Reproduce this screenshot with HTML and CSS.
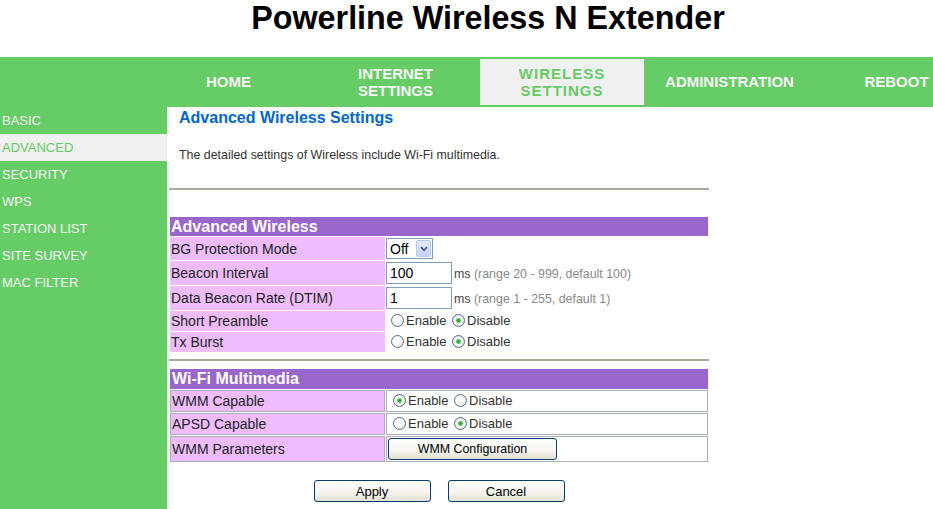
FILE: index.html
```html
<!DOCTYPE html>
<html>
<head>
<meta charset="utf-8">
<title>Advanced Wireless Settings</title>
<link rel="stylesheet" href="styles.css">
</head>
<body>
<div class="page">
  <h1 class="title">Powerline Wireless N Extender</h1>
  <nav class="topnav">
    <a class="tab">HOME</a>
    <a class="tab">INTERNET<br>SETTINGS</a>
    <a class="tab active">WIRELESS<br>SETTINGS</a>
    <a class="tab">ADMINISTRATION</a>
    <a class="tab">REBOOT</a>
  </nav>
  <div class="body-row">
    <ul class="sidenav">
      <li>BASIC</li>
      <li class="active">ADVANCED</li>
      <li>SECURITY</li>
      <li>WPS</li>
      <li>STATION LIST</li>
      <li>SITE SURVEY</li>
      <li>MAC FILTER</li>
    </ul>
    <main class="content">
      <h2 class="heading">Advanced Wireless Settings</h2>
      <p class="desc">The detailed settings of Wireless include Wi-Fi multimedia.</p>
      <hr class="rule">
      <table class="settings first-table">
        <tr><td class="hdr" colspan="2">Advanced Wireless</td></tr>
        <tr>
          <td class="lbl">BG Protection Mode</td>
          <td class="val">
            <span class="selwrap">
              <select class="sel"><option>Off</option><option>Auto</option><option>On</option></select>
              <span class="selarrow"><svg width="8" height="6" viewBox="0 0 8 6"><path d="M1 1.2 L4 4.2 L7 1.2" fill="none" stroke="#4c5f86" stroke-width="1.8"/></svg></span>
            </span>
          </td>
        </tr>
        <tr>
          <td class="lbl">Beacon Interval</td>
          <td class="val"><input class="txt" type="text" value="100"><span class="unit">ms <span class="range">(range 20 - 999, default 100)</span></span></td>
        </tr>
        <tr>
          <td class="lbl">Data Beacon Rate (DTIM)</td>
          <td class="val"><input class="txt" type="text" value="1"><span class="unit">ms <span class="range">(range 1 - 255, default 1)</span></span></td>
        </tr>
        <tr class="radios">
          <td class="lbl">Short Preamble</td>
          <td class="val"><input class="rb first" type="radio" name="sp">Enable <input class="rb" type="radio" name="sp" checked>Disable</td>
        </tr>
        <tr class="radios">
          <td class="lbl">Tx Burst</td>
          <td class="val"><input class="rb first" type="radio" name="tx">Enable <input class="rb" type="radio" name="tx" checked>Disable</td>
        </tr>
      </table>
      <hr class="rule rule2">
      <table class="settings bordered">
        <tr><td class="hdr" colspan="2">Wi-Fi Multimedia</td></tr>
        <tr class="radios">
          <td class="lbl">WMM Capable</td>
          <td class="val"><input class="rb first" type="radio" name="wmm" checked>Enable <input class="rb" type="radio" name="wmm">Disable</td>
        </tr>
        <tr class="radios">
          <td class="lbl">APSD Capable</td>
          <td class="val"><input class="rb first" type="radio" name="apsd">Enable <input class="rb" type="radio" name="apsd" checked>Disable</td>
        </tr>
        <tr>
          <td class="lbl">WMM Parameters</td>
          <td class="val"><button class="btn wmm" type="button">WMM Configuration</button></td>
        </tr>
      </table>
      <div class="actions">
        <button class="btn act" type="button">Apply</button>
        <button class="btn act" type="button">Cancel</button>
      </div>
    </main>
  </div>
</div>
</body>
</html>
```
FILE: styles.css
```css
* { box-sizing: border-box; }
html, body { margin: 0; padding: 0; overflow: hidden; background: #ffffff; }
body { font-family: "Liberation Sans", Arial, sans-serif; color: #222222; }

.page { width: 976px; min-height: 100vh; display: flex; flex-direction: column; }

.title {
  margin: 0; height: 57px; padding-top: 0;
  font-size: 32.3px; line-height: 36px; font-weight: bold;
  text-align: center; color: #000000;
}

.topnav { height: 50px; background: #66cc66; display: flex; padding-left: 145px; flex: none; }
.tab {
  width: 167px; flex: none; display: flex; align-items: center; justify-content: center;
  text-align: center; font-size: 15px; font-weight: bold; line-height: 17px; color: #f6f6f6;
  padding-bottom: 1px;
}
.tab.active { width: 164px; margin: 2px 2px 2px 1px; background: #f0f0f0; color: #66cc66; letter-spacing: 1px; }

.body-row { flex: 1; display: flex; }
.sidenav { width: 167px; flex: none; background: #66cc66; margin: 0; padding: 0; list-style: none; }
.sidenav li { height: 27px; line-height: 27px; padding-left: 2px; font-size: 13px; color: #f6f6f6; }
.sidenav li.active { background: #f0f0f0; color: #66cc66; }

.content { flex: 1; padding-left: 2px; }
.heading { margin: 2px 0 0 10px; font-size: 16px; line-height: 18px; font-weight: bold; color: #0066cc; }
.desc { margin: 21px 0 0 10px; font-size: 12.4px; line-height: 14px; color: #333333; }

.rule { width: 540px; height: 2px; margin: 26px 0 0 0; border: 0; background: #aaa99e; }
.rule2 { margin-top: 6px; }

.settings { width: 540px; border-collapse: separate; border-spacing: 1px; }
.first-table { margin-top: 26px; }
.bordered { margin-top: 7px; }
.settings td { padding: 1px 0 1px 1px; font-size: 14px; line-height: 16px; vertical-align: middle; }
.settings td.val { padding-left: 0; font-size: 13px; color: #333333; }
.settings .hdr { background: #9966cc; color: #ffffff; font-weight: bold; font-size: 16px; line-height: 17px; padding: 1px 0 1px 1px; }
.settings .lbl { width: 215px; background: #efbdff; color: #222222; }
.settings .radios td { line-height: 18px; }

.bordered td { border: 1px solid #a7aeb6; }
.bordered td.hdr { border-color: #9966cc; padding: 0 0 0 1px; line-height: 18px; }
.bordered td.val { padding-left: 1px; }

.selwrap { position: relative; display: inline-block; vertical-align: middle; }
.sel {
  -webkit-appearance: none; appearance: none; display: block;
  width: 47px; height: 21px; margin: 0; padding: 0 0 0 3px;
  border: 1px solid #7f9db9; border-radius: 0; background: #ffffff;
  font-family: "Liberation Sans", Arial, sans-serif; font-size: 14px; color: #000000;
}
.selarrow {
  position: absolute; right: 2px; top: 2px; width: 15px; height: 17px;
  background: linear-gradient(#e2eafd, #c3d4fa); border: 1px solid #b8caf4; border-radius: 2px;
  display: flex; align-items: center; justify-content: center; pointer-events: none;
}

.txt {
  width: 66px; height: 22px; margin: 0; padding: 0 0 0 3px;
  border: 1px solid #7f9db9; font-family: "Liberation Sans", Arial, sans-serif;
  font-size: 14px; color: #000000; vertical-align: baseline;
}
.unit { margin-left: 2px; font-size: 12.4px; color: #444444; }
.range { color: #888888; }

.rb {
  -webkit-appearance: none; appearance: none;
  width: 13px; height: 13px; margin: 0 2px 0 2px; vertical-align: -2px;
  border: 1px solid #55708c; border-radius: 50%;
  background: radial-gradient(circle at 40% 35%, #ffffff 30%, #dcdcd4 100%);
}
.rb.first { margin-left: 5px; }
.rb:checked {
  background: radial-gradient(circle at 50% 50%, #1f9e1f 0, #52c452 2px, #ffffff 3px, #f4f4f0 4px, #d8d8d0 100%);
}

.btn {
  height: 22px; margin: 0; padding: 0;
  border: 1px solid #003c74; border-radius: 3px;
  background: linear-gradient(#ffffff 0%, #f6f5f0 55%, #e3e0d3 100%);
  font-family: "Liberation Sans", Arial, sans-serif; color: #000000;
}
.wmm { display: block; width: 169px; font-size: 12.4px; }
.actions { width: 540px; margin-top: 17px; display: flex; justify-content: center; gap: 17px; }
.act { width: 117px; height: 22px; font-size: 13px; }
```
